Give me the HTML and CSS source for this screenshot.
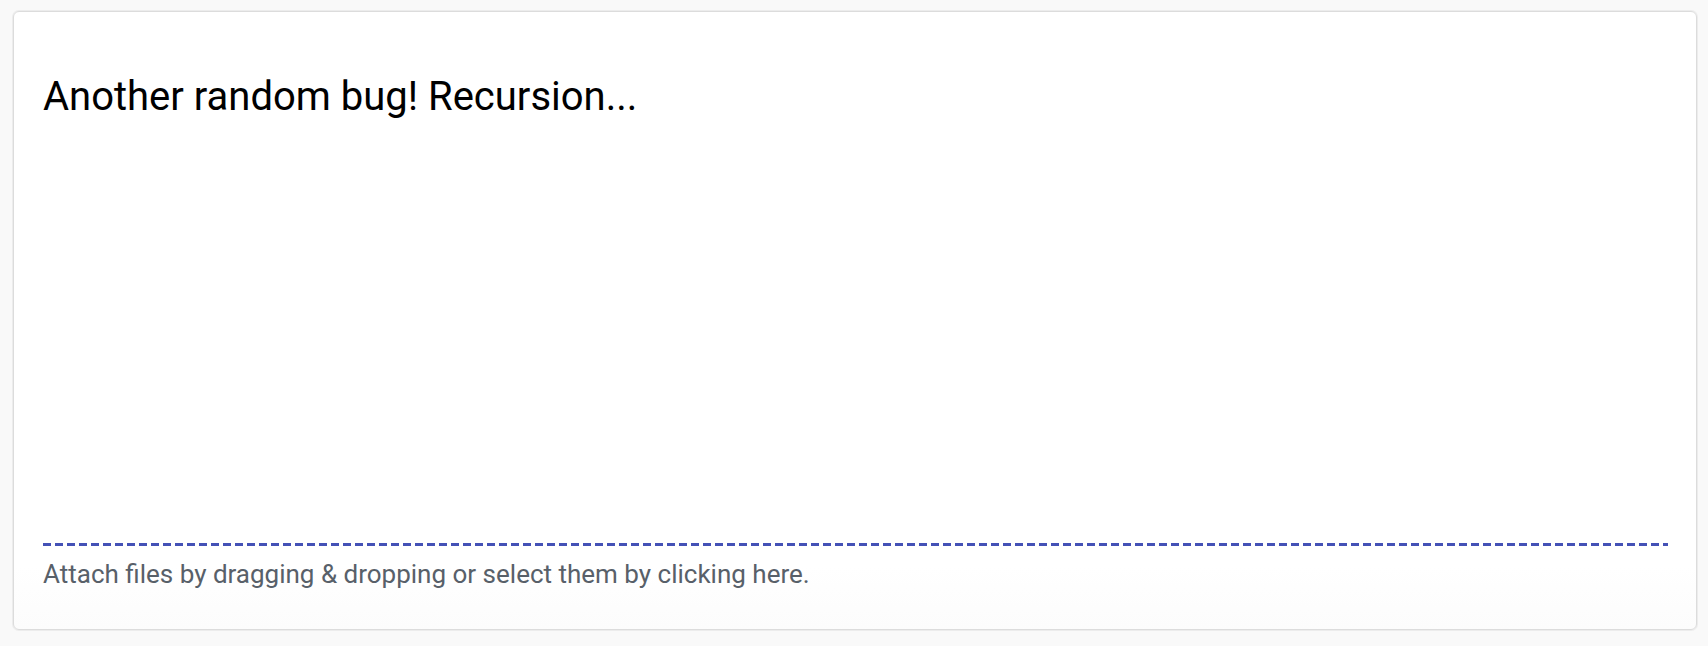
FILE: index.html
```html
<!DOCTYPE html>
<html lang="en">
<head>
<meta charset="utf-8">
<title>Editor</title>
<link rel="stylesheet" href="styles.css">
</head>
<body>
<div class="page">
  <div class="card">
    <div class="editor">
      <h1 class="title">Another random bug! Recursion...</h1>
    </div>
    <div class="drop-line"></div>
    <p class="hint">Attach files by dragging &amp; dropping or select them by clicking here.</p>
  </div>
</div>
</body>
</html>
```
FILE: styles.css
```css
html, body {
  margin: 0;
  height: 100%;
}
body {
  background: #f9f9f9;
  font-family: Roboto, "Liberation Sans", sans-serif;
}
.page {
  box-sizing: border-box;
  height: 646px;
  padding: 11px 11px 16px 13px;
}
.card {
  box-sizing: border-box;
  height: 619px;
  display: flex;
  flex-direction: column;
  background: linear-gradient(to bottom, #ffffff 0, #ffffff 90%, #fcfcfc 100%);
  border: 1px solid #dcdcdc;
  border-radius: 6px;
  box-shadow: 0 0 0 1px #ececec;
  padding: 0 28px 0 29px;
}
.editor {
  flex: 1;
  padding-top: 61px;
}
.title {
  margin: 0;
  font-size: 40px;
  font-weight: 400;
  line-height: 48px;
  color: #000;
}
.drop-line {
  height: 3px;
  background: repeating-linear-gradient(to right, #4451b6 0, #4451b6 8px, transparent 8px, transparent 12px);
}
.hint {
  margin: 0;
  padding: 13px 0 40px;
  font-size: 26px;
  line-height: 30px;
  color: #586069;
}
```
